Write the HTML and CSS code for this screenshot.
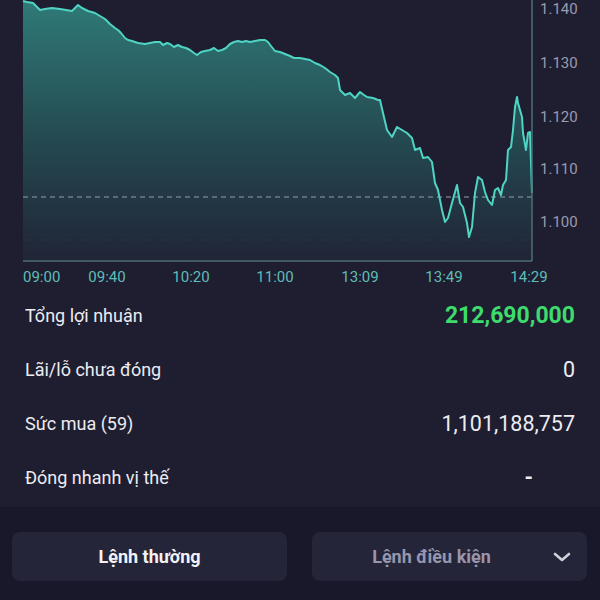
FILE: index.html
```html
<!DOCTYPE html>
<html lang="vi">
<head>
    <meta charset="UTF-8">
    <meta name="viewport" content="width=device-width, initial-scale=1.0">
    <title>Tài sản</title>
    <link rel="stylesheet" href="styles.css">
</head>
<body>
    <main class="summary">
        <svg class="chart" width="600" height="288" viewBox="0 0 600 288">
            <defs>
                <linearGradient id="areaFill" x1="0" y1="0" x2="0" y2="1">
                    <stop offset="0" stop-color="#2f7a78"/>
                    <stop offset="0.55" stop-color="#24484f"/>
                    <stop offset="1" stop-color="#202437"/>
                </linearGradient>
            </defs>
            <path class="area" d="M23,1 L27,2 L33,3 L36,6 L40,10 L45,9 L52,8 L60,9 L66,10 L72,11 L75,8 L78,5 L82,8 L88,11 L95,13 L100,16 L105,19 L110,24 L115,28 L118,30 L121,33 L125,38 L128,40 L132,41 L138,43 L145,44 L150,43 L155,42 L160,42 L163,45 L167,43 L170,44 L174,47 L178,45 L182,47 L186,48 L190,50 L194,53 L197,55 L201,52 L205,51 L210,50 L214,48 L218,51 L222,50 L226,48 L230,44 L234,42 L238,41 L242,42 L246,41 L250,42 L255,41 L260,40 L265,40 L268,42 L271,46 L275,51 L280,52 L285,54 L290,56 L294,58 L300,58 L305,59 L310,60 L315,63 L320,65 L325,68 L330,72 L335,75 L338,78 L340,90 L345,95 L350,93 L355,98 L360,92 L364,95 L367,97 L373,98 L378,100 L380,100 L383,113 L387,130 L392,137 L397,127 L402,130 L407,133 L412,138 L415,150 L420,148 L423,158 L428,157 L432,162 L435,183 L438,190 L442,210 L445,222 L448,218 L452,203 L457,185 L460,203 L463,207 L467,223 L469,237 L472,227 L475,193 L478,177 L482,180 L485,192 L488,200 L492,205 L495,190 L498,188 L501,195 L503,185 L506,180 L508,150 L511,147 L513,130 L515,107 L517,97 L518,103 L522,117 L523,133 L526,150 L528,133 L530,132 L532,193 L532,261 L23,261 Z"/>
            <line class="grid" x1="23" y1="240" x2="532" y2="240"/>
            <line class="ref" x1="23" y1="197" x2="532" y2="197"/>
            <path class="line" d="M23,1 L27,2 L33,3 L36,6 L40,10 L45,9 L52,8 L60,9 L66,10 L72,11 L75,8 L78,5 L82,8 L88,11 L95,13 L100,16 L105,19 L110,24 L115,28 L118,30 L121,33 L125,38 L128,40 L132,41 L138,43 L145,44 L150,43 L155,42 L160,42 L163,45 L167,43 L170,44 L174,47 L178,45 L182,47 L186,48 L190,50 L194,53 L197,55 L201,52 L205,51 L210,50 L214,48 L218,51 L222,50 L226,48 L230,44 L234,42 L238,41 L242,42 L246,41 L250,42 L255,41 L260,40 L265,40 L268,42 L271,46 L275,51 L280,52 L285,54 L290,56 L294,58 L300,58 L305,59 L310,60 L315,63 L320,65 L325,68 L330,72 L335,75 L338,78 L340,90 L345,95 L350,93 L355,98 L360,92 L364,95 L367,97 L373,98 L378,100 L380,100 L383,113 L387,130 L392,137 L397,127 L402,130 L407,133 L412,138 L415,150 L420,148 L423,158 L428,157 L432,162 L435,183 L438,190 L442,210 L445,222 L448,218 L452,203 L457,185 L460,203 L463,207 L467,223 L469,237 L472,227 L475,193 L478,177 L482,180 L485,192 L488,200 L492,205 L495,190 L498,188 L501,195 L503,185 L506,180 L508,150 L511,147 L513,130 L515,107 L517,97 L518,103 L522,117 L523,133 L526,150 L528,133 L530,132 L532,193"/>
            <line class="axis" x1="532" y1="0" x2="532" y2="261"/>
            <line class="axis" x1="23" y1="261" x2="532" y2="261"/>

            <g class="y-labels">
                <text x="540" y="14">1.140</text>
                <text x="540" y="68">1.130</text>
                <text x="540" y="122">1.120</text>
                <text x="540" y="174">1.110</text>
                <text x="540" y="227">1.100</text>
            </g>
            <g class="x-labels">
                <text x="23" y="282">09:00</text>
                <text x="107" y="282" text-anchor="middle">09:40</text>
                <text x="191" y="282" text-anchor="middle">10:20</text>
                <text x="275" y="282" text-anchor="middle">11:00</text>
                <text x="360" y="282" text-anchor="middle">13:09</text>
                <text x="444" y="282" text-anchor="middle">13:49</text>
                <text x="529" y="282" text-anchor="middle">14:29</text>
            </g>
        </svg>

        <div class="stat-list">
            <div class="stat-row">
                <span class="stat-label">Tổng lợi nhuận</span>
                <span class="stat-value profit">212,690,000</span>
            </div>
            <div class="stat-row">
                <span class="stat-label">Lãi/lỗ chưa đóng</span>
                <span class="stat-value">0</span>
            </div>
            <div class="stat-row">
                <span class="stat-label">Sức mua (59)</span>
                <span class="stat-value">1,101,188,757</span>
            </div>
            <div class="stat-row">
                <span class="stat-label">Đóng nhanh vị thế</span>
                <span class="stat-value dash">-</span>
            </div>
        </div>
    </main>

    <footer class="order-bar">
        <button type="button" class="order-btn active">Lệnh thường</button>
        <button type="button" class="order-btn muted">
            <span>Lệnh điều kiện</span>
            <svg class="chevron" width="18" height="10" viewBox="0 0 18 10">
                <path d="M2,2 L9,8 L16,2" fill="none" stroke="#cfcfdb" stroke-width="2.6" stroke-linecap="round" stroke-linejoin="round"/>
            </svg>
        </button>
    </footer>
</body>
</html>
```

FILE: styles.css
```css
html, body {
    margin: 0;
    height: 100%;
}
body {
    font-family: Roboto, "Noto Sans", Arial, sans-serif;
    background-color: #1f1e31;
    color: #ececf2;
    display: flex;
    flex-direction: column;
    overflow: hidden;
}
.summary {
    padding-bottom: 3px;
}
.chart {
    display: block;
}
.area {
    fill: url(#areaFill);
}
.line {
    fill: none;
    stroke: #4fd4c4;
    stroke-width: 2;
    stroke-linejoin: round;
}
.ref {
    stroke: #8fa4a9;
    stroke-width: 1;
    stroke-dasharray: 5 4;
}
.grid {
    stroke: #2c3546;
    stroke-width: 1;
    stroke-dasharray: 6 14;
}
.axis {
    stroke: #4c6e75;
    stroke-width: 1.5;
}
.y-labels text {
    font-size: 15px;
    fill: #9b9aad;
}
.x-labels text {
    font-size: 15px;
    fill: #5ebdb6;
}
.stat-list {
    display: flex;
    flex-direction: column;
    padding: 0 25px;
}
.stat-row {
    height: 54px;
    display: flex;
    align-items: center;
    justify-content: space-between;
}
.stat-label {
    font-size: 18px;
}
.stat-value {
    font-size: 21.5px;
}
.stat-value.profit {
    color: #3ddc6c;
    font-weight: bold;
    font-size: 23px;
}
.stat-value.dash {
    padding-right: 42px;
    font-weight: bold;
}
.order-bar {
    flex: 1;
    background-color: #18182a;
    display: grid;
    grid-template-columns: 1fr 1fr;
    gap: 25px;
    padding: 25px 13px 0 12px;
    align-items: start;
}
.order-btn {
    height: 49px;
    border: none;
    border-radius: 8px;
    background-color: #252539;
    font-family: Roboto, "Noto Sans", Arial, sans-serif;
    font-size: 18px;
    font-weight: bold;
    color: #f2f2f6;
    display: flex;
    align-items: center;
    justify-content: center;
    position: relative;
}
.order-btn.muted {
    color: #9896ac;
    padding-right: 42px;
}
.chevron {
    position: absolute;
    right: 16px;
    top: 20px;
}
```
